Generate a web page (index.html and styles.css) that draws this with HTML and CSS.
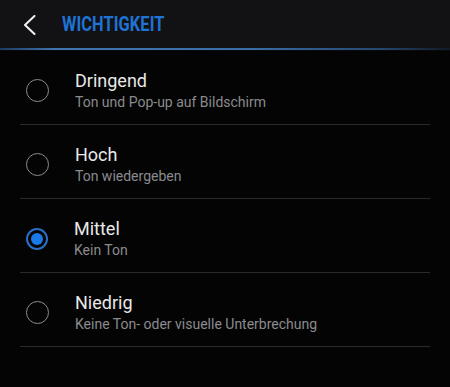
FILE: index.html
```html
<!DOCTYPE html>
<html lang="de">
<head>
    <meta charset="UTF-8">
    <meta name="viewport" content="width=device-width, initial-scale=1.0">
    <title>Wichtigkeit</title>
    <link rel="stylesheet" href="styles.css">
</head>
<body>
    <header class="topbar">
        <svg class="back" width="14" height="20" viewBox="0 0 14 20">
            <polyline points="11.5,1 2,10 11.5,19" fill="none" stroke="#f2f2f2" stroke-width="2" stroke-linecap="round" stroke-linejoin="round"/>
        </svg>
        <h1>WICHTIGKEIT</h1>
    </header>

    <ul class="options">
        <li class="option">
            <span class="radio"></span>
            <div class="label">
                <div class="title">Dringend</div>
                <div class="desc">Ton und Pop-up auf Bildschirm</div>
            </div>
        </li>
        <li class="option">
            <span class="radio"></span>
            <div class="label">
                <div class="title">Hoch</div>
                <div class="desc">Ton wiedergeben</div>
            </div>
        </li>
        <li class="option">
            <span class="radio checked"></span>
            <div class="label">
                <div class="title">Mittel</div>
                <div class="desc">Kein Ton</div>
            </div>
        </li>
        <li class="option">
            <span class="radio"></span>
            <div class="label">
                <div class="title">Niedrig</div>
                <div class="desc">Keine Ton- oder visuelle Unterbrechung</div>
            </div>
        </li>
    </ul>
</body>
</html>
```

FILE: styles.css
```css
body {
    margin: 0;
    background-color: #040404;
    font-family: Roboto, Arial, sans-serif;
    color: #ededed;
}
.topbar {
    height: 49px;
    background-color: #121214;
    display: flex;
    align-items: center;
    position: relative;
    border-bottom: 2px solid #0a0a0c;
}
.topbar::after {
    content: "";
    position: absolute;
    left: 0;
    right: 0;
    bottom: -1px;
    height: 2px;
    background: linear-gradient(to right, #1d3a5c 0%, #3e74b0 12%, #3a6ea8 55%, #24476e 85%, #121a26 100%);
}
.back {
    margin-left: 23px;
    margin-top: 1px;
}
.topbar h1 {
    margin: 0 0 0 25px;
    font-size: 19.5px;
    font-weight: 700;
    color: #1f73d4;
    display: inline-block;
    transform: scaleX(0.84);
    transform-origin: left center;
    letter-spacing: 0.1px;
}
.options {
    list-style: none;
    margin: 0 20px;
    padding: 0;
}
.option {
    display: flex;
    align-items: center;
    padding: 18px 0 13px;
    border-bottom: 1px solid #2a2a2c;
}
.radio {
    box-sizing: border-box;
    width: 23px;
    height: 23px;
    margin-left: 6px;
    margin-top: 1px;
    border: 1.6px solid #8c8c8e;
    border-radius: 50%;
    flex-shrink: 0;
    position: relative;
}
.radio.checked {
    width: 22px;
    height: 22px;
    border: 2px solid #2a6fc4;
}
.radio.checked::after {
    content: "";
    position: absolute;
    left: 3px;
    top: 3px;
    width: 12px;
    height: 12px;
    border-radius: 50%;
    background-color: #1a79e6;
}
.label {
    margin-left: 26px;
}
.title {
    font-size: 18px;
    line-height: 24px;
    color: #e8e8e8;
}
.desc {
    font-size: 14px;
    line-height: 18px;
    color: #8b8b8f;
}
```
